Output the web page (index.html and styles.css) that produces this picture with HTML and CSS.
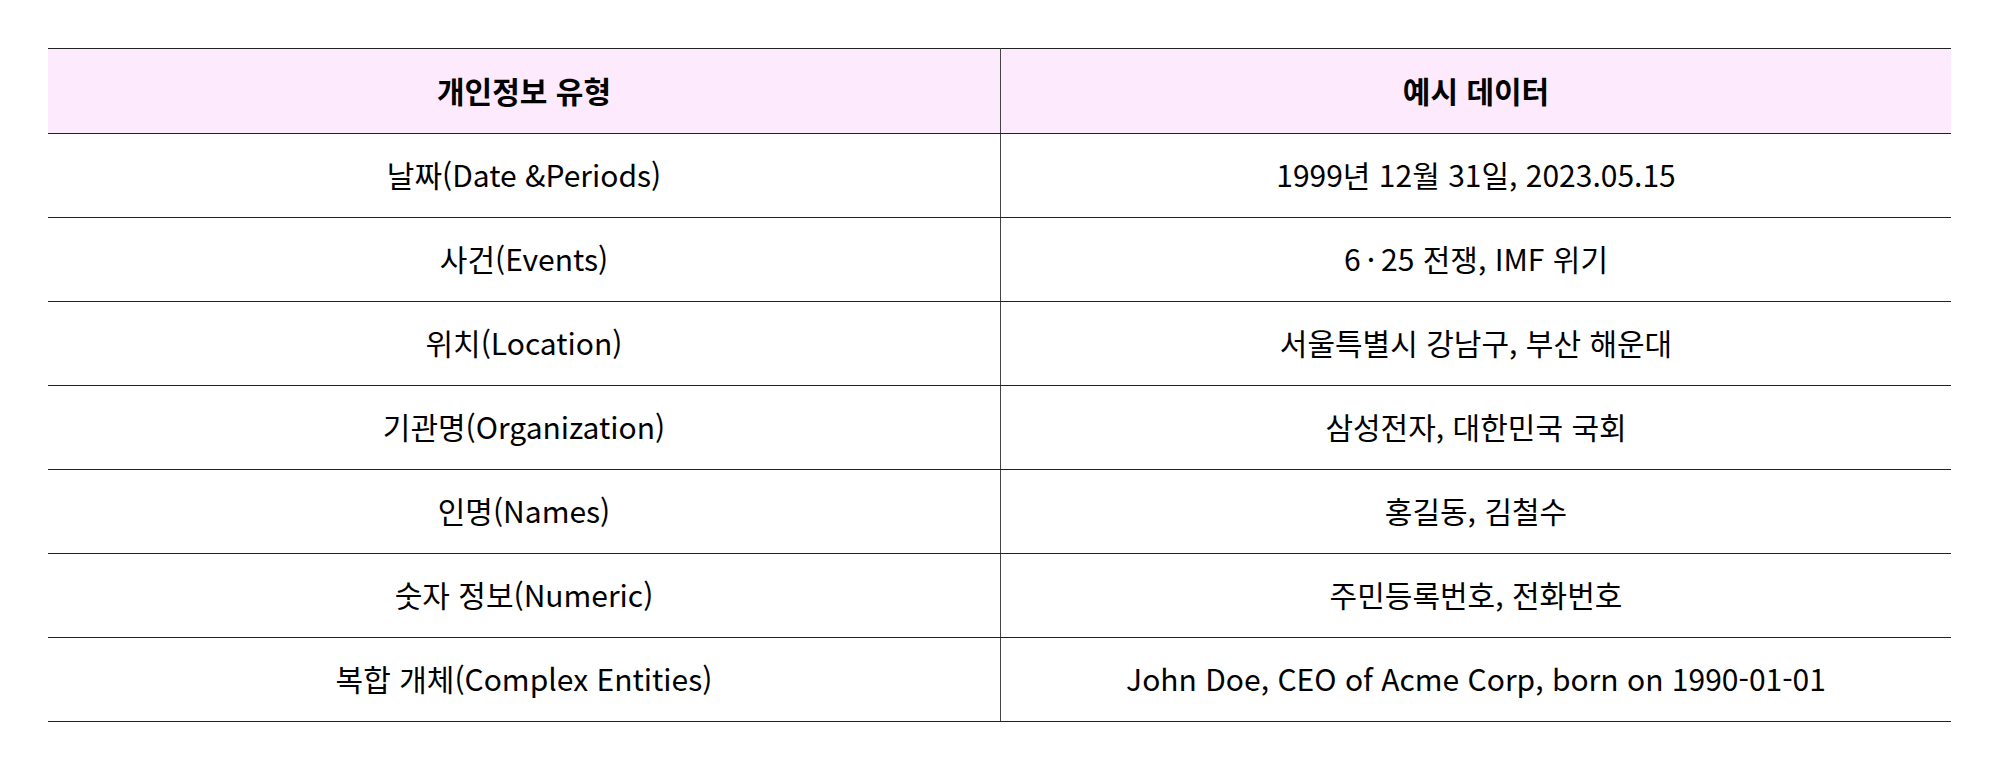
FILE: index.html
```html
<!DOCTYPE html>
<html lang="ko">
<head>
<meta charset="utf-8">
<link rel="stylesheet" href="styles.css">
</head>
<body>
<div class="wrap">
<table class="pii">
<thead>
<tr><th>개인정보 유형</th><th>예시 데이터</th></tr>
</thead>
<tbody>
<tr><td>날짜(Date &amp;Periods)</td><td>1999년 12월 31일, 2023.05.15</td></tr>
<tr><td>사건(Events)</td><td>6&#8201;·&#8201;25 전쟁, IMF 위기</td></tr>
<tr><td>위치(Location)</td><td>서울특별시 강남구, 부산 해운대</td></tr>
<tr><td>기관명(Organization)</td><td>삼성전자, 대한민국 국회</td></tr>
<tr><td>인명(Names)</td><td>홍길동, 김철수</td></tr>
<tr><td>숫자 정보(Numeric)</td><td>주민등록번호, 전화번호</td></tr>
<tr><td>복합 개체(Complex Entities)</td><td>John Doe, CEO of Acme Corp, born on 1990-01-01</td></tr>
</tbody>
</table>
</div>
</body>
</html>
```
FILE: styles.css
```css
html, body {
  margin: 0;
  padding: 0;
  background: #ffffff;
}
body {
  font-family: "Noto Sans CJK KR", "Noto Sans", sans-serif;
  color: #000;
}
.wrap {
  padding: 48px 49px 0 48px;
}
.pii {
  width: 1903px;
  border-collapse: collapse;
  table-layout: fixed;
}
.pii th, .pii td {
  text-align: center;
  vertical-align: middle;
  font-size: 30px;
  border-top: 1.5px solid #222;
  border-bottom: 1.5px solid #222;
  padding: 0 0 3px 0;
}
.pii th {
  height: 81px;
  font-weight: 700;
  background: #fdeafc;
}
.pii td {
  height: 80px;
  font-weight: 400;
}
.pii th:first-child, .pii td:first-child {
  width: 952px;
  border-right: 1px solid #444;
}
```
